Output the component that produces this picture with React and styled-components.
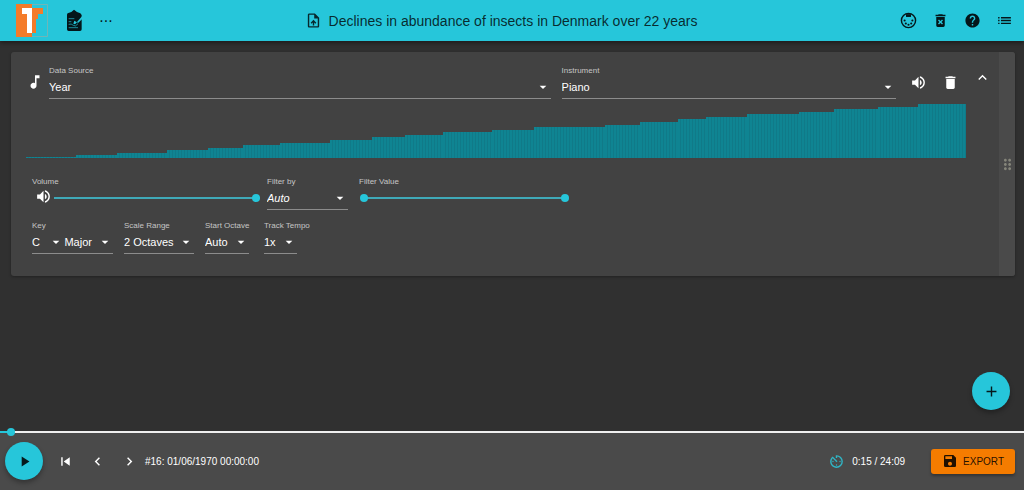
import React, {useState} from "react";
import styled, {createGlobalStyle, css} from "styled-components";
import {
  MdAdd,
  MdArrowDropDown,
  MdAvTimer,
  MdChevronLeft,
  MdChevronRight,
  MdDelete,
  MdDragIndicator,
  MdExpandLess,
  MdHelp,
  MdList,
  MdMusicNote,
  MdOutlineUploadFile,
  MdPlayArrow,
  MdSave,
  MdSkipPrevious,
  MdVolumeUp
} from "react-icons/md";

const colors = {
  primary: "#26c6da",
  track: "#3fa9b8",
  timer: "#30b5c5",
  secondary: "#f57c00",
  ink: "#04161a",
  page: "#303030",
  paper: "#424242",
  bar: "#4a4a4a",
  wave: "#0f8492",
  waveDark: "#107a88"
};

// Relative number of records in each year, oldest first.
const yearRuns = [
  50, 41, 50, 41, 35, 37, 50, 42, 33, 38, 49,
  42, 71, 35, 38, 28, 41, 52, 35, 44, 40, 48
];

const Logo = () => (
  <svg width="33" height="33" viewBox="0 0 33 33" aria-hidden="true">
    <path d="M17 .5h15.500v32H17" fill="none" stroke="#6fb6b8" />
    <path d="M1 0h16v33H1z" fill="#f47b29" />
    <path d="M17 4h11v6h-5v5h-2v14h-4z" fill="#f47b29" />
    <path d="M7 4h10v25h-5V10H7z" fill="#fff" />
  </svg>
);

const ClipboardIcon = () => (
  <svg width="17" height="23" viewBox="0 0 51 69" aria-hidden="true">
    <path
      d="M3 17q0-4 4-5l9-3 8-7 9 7 10 4 4 5V61q0 5-5 5H8q-5 0-5-5z"
      fill={colors.ink}
    />
    <path d="M22 44l3-9 8 5-6 6zM33 39l15-17v9L36 42z" fill={colors.primary} />
    <path
      d="M8 29h17M8 38h8M8 46q8-3 14 3t14-5M8 56h28"
      fill="none"
      stroke={colors.primary}
      strokeWidth="2"
    />
  </svg>
);

const MidiIcon = () => (
  <svg width="17" height="17" viewBox="0 0 24 24" fill="currentColor" aria-hidden="true">
    <circle cx="12" cy="12" r="10" fill="none" stroke="currentColor" strokeWidth="2" />
    <path d="M8.500 3h7v4h-7z" />
    <circle cx="6.500" cy="12" r="1.500" />
    <circle cx="17.500" cy="12" r="1.500" />
    <circle cx="8.200" cy="16.200" r="1.500" />
    <circle cx="15.800" cy="16.200" r="1.500" />
    <circle cx="12" cy="18" r="1.500" />
  </svg>
);

const ClearIcon = () => (
  <svg width="17" height="17" viewBox="0 0 24 24" aria-hidden="true">
    <path
      fill="currentColor"
      d="M6 19a2 2 0 0 0 2 2h8a2 2 0 0 0 2-2V7H6v12m2.460-7.120l1.410-1.410L12 12.590l2.120-2.120 1.410 1.410L13.410 14l2.120 2.120-1.410 1.410L12 15.410l-2.120 2.120-1.410-1.410L10.590 14l-2.130-2.120M15.500 4l-1-1h-5l-1 1H5v2h14V4h-3.500z"
    />
  </svg>
);

const SelectBox = ({id, label, options, italic, ...rest}) => (
  <SelectWrap {...rest}>
    <StyledSelect id={id} aria-label={label} $italic={italic}>
      {
        options.map(option => <option key={option}>{ option }</option>)
      }
    </StyledSelect>
    <SelectArrow size={16} />
  </SelectWrap>
);

const SelectField = ({id, label, options, italic, grow, width, minWidth}) => (
  <Field $grow={grow} $minWidth={minWidth}>
    <Label htmlFor={id}>{ label }</Label>
    <Underline $width={width}>
      <SelectBox id={id} options={options} italic={italic} $grow={1} />
    </Underline>
  </Field>
);

const Histogram = () => (
  <Chart role="img" aria-label="Year values">
    {
      yearRuns.map((run, index) => (
        <ChartStep
          key={`year-${index}`}
          style={{
            flexGrow: run,
            height: `${index / (yearRuns.length - 1) * 100}%`
          }}
        />
      ))
    }
  </Chart>
);

const Track = () => {
  const [volume, setVolume] = useState(100);
  const [low, setLow] = useState(0);
  const [high, setHigh] = useState(100);

  return (
    <Card>
      <CardBody>
        <SourceRow>
          <NoteIcon size={18} />
          <Sources>
            <SelectField id="source" label="Data Source" options={["Year"]} grow={3} />
            <SelectField id="instrument" label="Instrument" options={["Piano"]} grow={2} />
          </Sources>
          <TrackActions>
            <IconButton aria-label="Mute track"><MdVolumeUp size={17} /></IconButton>
            <IconButton aria-label="Delete track"><MdDelete size={17} /></IconButton>
            <IconButton aria-label="Collapse track" $raised><MdExpandLess size={17} /></IconButton>
          </TrackActions>
        </SourceRow>
        <Histogram />
        <Settings>
          <SettingsRow>
            <VolumeField>
              <Label htmlFor="volume">Volume</Label>
              <VolumeControl>
                <MdVolumeUp size={17} />
                <Slider
                  id="volume"
                  type="range"
                  value={volume}
                  onChange={e => setVolume(e.target.value)}
                />
              </VolumeControl>
            </VolumeField>
            <SelectField id="filter-by" label="Filter by" options={["Auto"]} width={81} italic />
            <RangeField>
              <Label as="span" id="filter-label">Filter Value</Label>
              <RangePair role="group" aria-labelledby="filter-label">
                <RangeSlider
                  type="range"
                  aria-label="Lowest value"
                  value={low}
                  onChange={e => setLow(e.target.value)}
                />
                <RangeSlider
                  type="range"
                  aria-label="Highest value"
                  value={high}
                  onChange={e => setHigh(e.target.value)}
                />
              </RangePair>
            </RangeField>
          </SettingsRow>
          <SettingsRow>
            <Field>
              <Label htmlFor="key">Key</Label>
              <Underline $width={81}>
                <SelectBox id="key" options={["C"]} $grow={2} />
                <SelectBox id="mode" label="Mode" options={["Major"]} $grow={3} />
              </Underline>
            </Field>
            <SelectField id="range" label="Scale Range" options={["2 Octaves"]} width={70} />
            <SelectField id="octave" label="Start Octave" options={["Auto"]} width={44} minWidth={48} />
            <SelectField id="tempo" label="Track Tempo" options={["1x"]} width={33} minWidth={48} />
          </SettingsRow>
        </Settings>
      </CardBody>
      <DragHandle>
        <MdDragIndicator size={17} />
      </DragHandle>
    </Card>
  );
};

const Player = () => {
  const [position, setPosition] = useState(10);

  return (
    <Footer>
      <Progress
        type="range"
        aria-label="Playback position"
        max={1449}
        value={position}
        onChange={e => setPosition(Number(e.target.value))}
        style={{"--played": `${position / 1449 * 100}%`}}
      />
      <Fab aria-label="Play"><MdPlayArrow size={17} /></Fab>
      <Transport>
        <IconButton aria-label="Back to start"><MdSkipPrevious size={17} /></IconButton>
        <IconButton aria-label="Previous record"><MdChevronLeft size={17} /></IconButton>
        <IconButton aria-label="Next record"><MdChevronRight size={17} /></IconButton>
      </Transport>
      <Status>#16: 01/06/1970 00:00:00</Status>
      <Spacer />
      <IconButton aria-label="Duration" $color={colors.timer}><MdAvTimer size={17} /></IconButton>
      <Status>0:15 / 24:09</Status>
      <ExportButton>
        <MdSave size={16} />
        EXPORT
      </ExportButton>
    </Footer>
  );
};

const App = () => (
  <Page>
    <GlobalStyle />
    <Header>
      <HeaderGroup>
        <Logo />
        <ProjectButton aria-label="Projects"><ClipboardIcon /></ProjectButton>
        <MoreButton aria-label="More">...</MoreButton>
      </HeaderGroup>
      <Title>
        <MdOutlineUploadFile size={17} />
        Declines in abundance of insects in Denmark over 22 years
      </Title>
      <HeaderGroup>
        <IconButton aria-label="MIDI output" $color={colors.ink}><MidiIcon /></IconButton>
        <IconButton aria-label="Clear all" $color={colors.ink}><ClearIcon /></IconButton>
        <IconButton aria-label="Help" $color={colors.ink}><MdHelp size={17} /></IconButton>
        <IconButton aria-label="Menu" $color={colors.ink}><MdList size={17} /></IconButton>
      </HeaderGroup>
    </Header>
    <Main>
      <Track />
    </Main>
    <AddButton aria-label="Add track"><MdAdd size={17} /></AddButton>
    <Player />
  </Page>
);

const GlobalStyle = createGlobalStyle`
  * {
    box-sizing: border-box;
  }

  body {
    margin: 0;
    background: ${colors.page};
    color: white;
    font-family: "Liberation Sans", Arial, sans-serif;
    font-size: 11px;
  }

  button, select, input {
    font: inherit;
    margin: 0;
  }

  svg {
    display: block;
    flex: none;
  }
`;

const Page = styled.div`
  position: relative;
  display: flex;
  flex-direction: column;
  min-height: 100vh;
`;

const Header = styled.header`
  display: flex;
  align-items: center;
  height: 41px;
  padding: 0 4px 0 15px;
  background: ${colors.primary};
  color: rgba(0, 0, 0, 0.8);
  box-shadow: 0 2px 4px rgba(0, 0, 0, 0.4);
`;

const HeaderGroup = styled.div`
  display: flex;
  align-items: center;
`;

const Title = styled.h1`
  display: flex;
  flex: 1;
  align-items: center;
  justify-content: center;
  gap: 7px;
  margin: 0;
  padding-right: 12px;
  font-size: 14px;
  font-weight: normal;
  white-space: nowrap;
`;

const IconButton = styled.button`
  display: flex;
  align-items: center;
  justify-content: center;
  width: 32px;
  height: 24px;
  padding: 0;
  border: none;
  background: none;
  color: ${({$color}) => $color || "white"};
  cursor: pointer;
  ${({$raised}) => $raised && css`align-self: flex-start;`}
`;

const ProjectButton = styled(IconButton)`
  margin-left: 10px;
`;

const MoreButton = styled(IconButton)`
  color: rgba(0, 0, 0, 0.87);
  font-size: 16px;
  line-height: 1;
  padding-bottom: 8px;
`;

const Main = styled.main`
  padding: 11px 9px 11px 11px;
`;

const Card = styled.section`
  display: flex;
  border-radius: 3px;
  background: ${colors.paper};
  box-shadow: 0 1px 3px rgba(0, 0, 0, 0.3);
  overflow: hidden;
`;

const CardBody = styled.div`
  flex: 1;
  padding: 13px 0 22px 15px;
`;

const DragHandle = styled.div`
  display: flex;
  align-items: center;
  justify-content: center;
  width: 16px;
  background: ${colors.bar};
  color: #85857a;
`;

const SourceRow = styled.div`
  display: flex;
  align-items: center;
`;

const NoteIcon = styled(MdMusicNote)`
  margin-right: 5px;
`;

const Sources = styled.div`
  display: flex;
  flex: 1;
  gap: 11px;
`;

const TrackActions = styled.div`
  display: flex;
  align-self: stretch;
  align-items: center;
  padding: 0 1px 0 6px;
`;

const Field = styled.div`
  display: flex;
  flex-direction: column;
  min-width: ${({$minWidth}) => $minWidth ? `${$minWidth}px` : "auto"};
  ${({$grow}) => $grow && css`flex: ${$grow} 1 0;`}
`;

const Label = styled.label`
  display: block;
  color: rgba(255, 255, 255, 0.7);
  font-size: 8px;
  line-height: 12px;
  white-space: nowrap;
`;

const Underline = styled.div`
  display: flex;
  width: ${({$width}) => $width ? `${$width}px` : "auto"};
  padding-bottom: 1px;
  border-bottom: 1px solid #8c8c8c;
`;

const SelectWrap = styled.div`
  position: relative;
  flex: ${({$grow}) => $grow} 1 0;
  min-width: 0;
`;

const StyledSelect = styled.select`
  appearance: none;
  display: block;
  width: 100%;
  height: 20px;
  padding: 0 16px 0 0;
  border: none;
  border-radius: 0;
  outline: none;
  background: transparent;
  color: white;
  font-style: ${({$italic}) => $italic ? "italic" : "normal"};

  option {
    background: ${colors.paper};
  }
`;

const SelectArrow = styled(MdArrowDropDown)`
  position: absolute;
  top: 2px;
  right: 0;
  pointer-events: none;
`;

const Chart = styled.div`
  display: flex;
  align-items: flex-end;
  height: 54px;
  margin: 5px 33px 0 0;
`;

const ChartStep = styled.div`
  flex-basis: 0;
  min-height: 1px;
  background: repeating-linear-gradient(
    to right,
    ${colors.wave} 0 2px,
    ${colors.waveDark} 2px 3px
  );
`;

const Settings = styled.div`
  display: flex;
  flex-direction: column;
  gap: 10px;
  padding: 18px 0 0 6px;
`;

const SettingsRow = styled.div`
  display: flex;
  gap: 11px;
`;

const VolumeField = styled.div`
  width: 224px;
`;

const VolumeControl = styled.div`
  display: flex;
  align-items: flex-start;
  gap: 2px;
  height: 20px;
  padding-left: 3px;
  margin-right: -4px;
`;

const thumb = css`
  appearance: none;
  width: 8px;
  height: 8px;
  border: none;
  border-radius: 50%;
  background: ${colors.primary};
  pointer-events: auto;
`;

const Slider = styled.input`
  appearance: none;
  flex: 1;
  align-self: center;
  min-width: 0;
  height: 8px;
  outline: none;
  background: linear-gradient(${colors.track}, ${colors.track}) center / 100% 2px no-repeat;

  &::-webkit-slider-thumb {
    ${thumb}
  }

  &::-moz-range-thumb {
    ${thumb}
  }
`;

const RangeField = styled.div`
  width: 210px;
`;

const RangePair = styled.div`
  display: grid;
  height: 20px;
  margin-left: 1px;
  background: linear-gradient(${colors.track}, ${colors.track}) center / 200px 2px no-repeat;
`;

const RangeSlider = styled(Slider)`
  grid-area: 1 / 1;
  background: none;
  pointer-events: none;
`;

const Footer = styled.footer`
  position: relative;
  display: flex;
  align-items: center;
  height: 58px;
  margin-top: auto;
  padding: 0 9px 0 5px;
  background: ${colors.bar};
`;

const Progress = styled(Slider)`
  position: absolute;
  top: -4px;
  left: 0;
  width: 100%;
  background: linear-gradient(
    to right,
    ${colors.primary} var(--played),
    #f0f0f0 var(--played)
  ) center / 100% 2px no-repeat;
`;

const Fab = styled.button`
  display: flex;
  align-items: center;
  justify-content: center;
  width: 38px;
  height: 38px;
  padding: 0;
  border: none;
  border-radius: 50%;
  background: ${colors.primary};
  color: rgba(0, 0, 0, 0.87);
  box-shadow: 0 3px 5px rgba(0, 0, 0, 0.3);
  cursor: pointer;
`;

const AddButton = styled(Fab)`
  position: absolute;
  right: 14px;
  bottom: 80px;
`;

const Transport = styled.div`
  display: flex;
  margin-left: 6px;
`;

const Status = styled.span`
  font-size: 10px;
  white-space: nowrap;
`;

const Spacer = styled.div`
  flex: 1;
`;

const ExportButton = styled.button`
  display: flex;
  align-items: center;
  gap: 5px;
  height: 25px;
  margin-left: 26px;
  padding: 0 11px;
  border: none;
  border-radius: 3px;
  background: ${colors.secondary};
  color: rgba(0, 0, 0, 0.87);
  font-size: 10px;
  box-shadow: 0 2px 3px rgba(0, 0, 0, 0.3);
  cursor: pointer;
`;

export default App;
